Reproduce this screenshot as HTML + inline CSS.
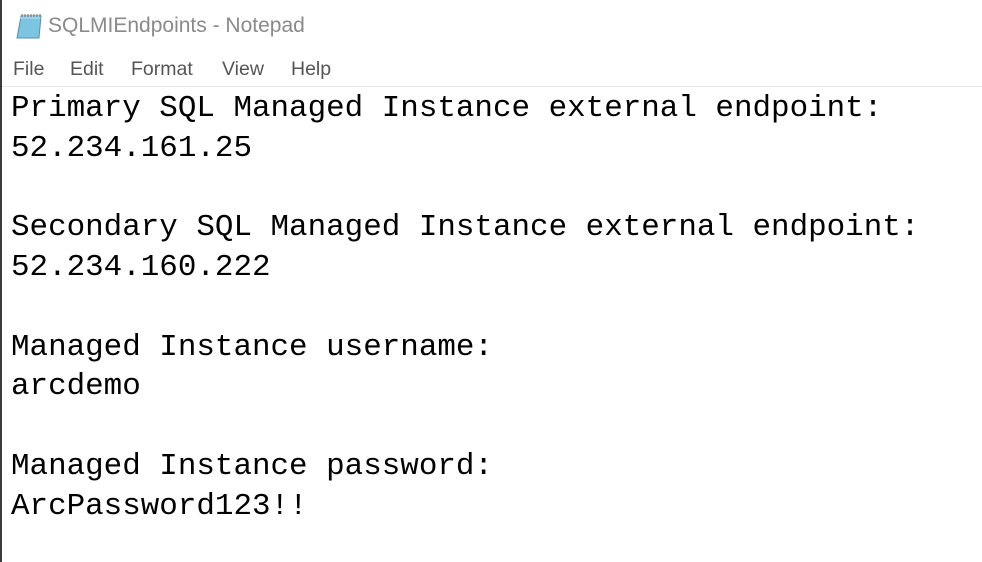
<!DOCTYPE html>
<html><head><style>
html,body{margin:0;padding:0;background:#fff;width:982px;height:562px;overflow:hidden;position:relative}
.lb{position:absolute;left:0;top:0;width:2px;height:562px;background:#3a3a3a}
.title{position:absolute;left:48px;top:14px;font:21px "Liberation Sans",sans-serif;color:#8a8a8a}
.menu span{position:absolute;top:58px;font:19.5px "Liberation Sans",sans-serif;color:#555}
.sep{position:absolute;left:2px;right:0;top:86px;height:1px;background:#e8e8e8}
pre{position:absolute;left:11px;top:89px;margin:0;font:30.9px/39.75px "Liberation Mono",monospace;color:#000}
</style></head><body>
<div class="lb"></div>
<svg style="position:absolute;left:14px;top:11px" width="30" height="30" viewBox="0 0 30 30">
<path d="M7 5 L27 5 L25 27 L3 27 Z" fill="#7cc4e0" stroke="#5a8fa8"/>
<path d="M7 5 L27 5 L26 8 L6 8 Z" fill="#9dd3ea"/>
<path d="M8 3v3M11 3v3M14 3v3M17 3v3M20 3v3M23 3v3M26 3v3" stroke="#666" stroke-width="1"/>
</svg>
<div class="title">SQLMIEndpoints - Notepad</div>
<div class="menu"><span style="left:13px">File</span><span style="left:70px">Edit</span><span style="left:131px">Format</span><span style="left:222px">View</span><span style="left:291px">Help</span></div>
<div class="sep"></div>
<pre>Primary SQL Managed Instance external endpoint:
52.234.161.25

Secondary SQL Managed Instance external endpoint:
52.234.160.222

Managed Instance username:
arcdemo

Managed Instance password:
ArcPassword123!!</pre>
</body></html>
